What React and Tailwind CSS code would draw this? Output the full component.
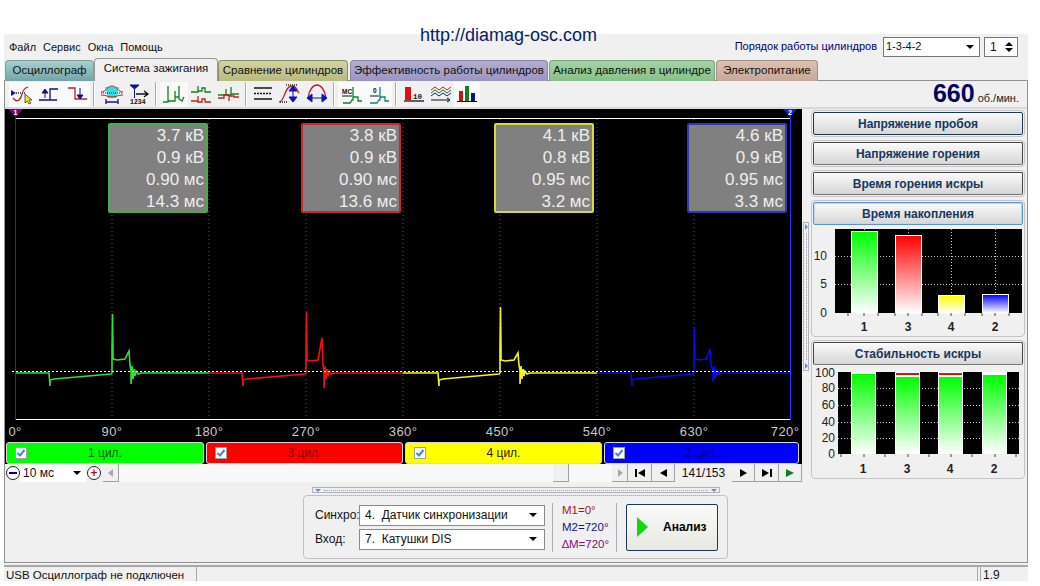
const font = "font-['Liberation_Sans',Arial,sans-serif]";

const infoBoxes = [
  { rows: ['3.7 кВ', '0.9 кВ', '0.90 мс', '14.3 мс'], border: 'border-[#44b044]' },
  { rows: ['3.8 кВ', '0.9 кВ', '0.90 мс', '13.6 мс'], border: 'border-[#c42a2a]' },
  { rows: ['4.1 кВ', '0.8 кВ', '0.95 мс', '3.2 мс'], border: 'border-[#d8d838]' },
  { rows: ['4.6 кВ', '0.9 кВ', '0.95 мс', '3.3 мс'], border: 'border-[#3038b8]' },
];

const channels = [
  { label: '1 цил.', cls: 'bg-[#00ff00] text-[#0a5a0a] w-[198px]' },
  { label: '3 цил.', cls: 'bg-[#ff0000] text-[#8a0000] w-[197px]' },
  { label: '4 цил.', cls: 'bg-[#ffff00] text-[#222200] w-[197px]' },
  { label: '2 цил.', cls: 'bg-[#0000ff] text-[#000090] w-[195px]' },
];

const waves = [
  { color: '#2fe02f', x0: 16, x1: 209, drop: 49, spike: 112, top: 315, plat: 360, bumpX: 129, bumpY: 352, fallX: 131, fallY: 385 },
  { color: '#f01010', x0: 209, x1: 403, drop: 242, spike: 306, top: 313, plat: 361, bumpX: 322, bumpY: 339, fallX: 324, fallY: 389 },
  { color: '#f4f420', x0: 403, x1: 597, drop: 438, spike: 500, top: 308, plat: 361, bumpX: 518, bumpY: 354, fallX: 520, fallY: 385 },
  { color: '#0808e8', x0: 597, x1: 790, drop: 631, spike: 694, top: 328, plat: 360, bumpX: 710, bumpY: 350, fallX: 713, fallY: 383 },
];

const wavePath = (w) => {
  const { x0, x1, drop, spike, top, plat, bumpX, bumpY, fallX, fallY } = w;
  return [
    `M${x0} 374 L${drop} 374 L${drop + 1} 387 L${drop + 1} 381 L${drop + 5} 380 L${spike - 1} 375 L${spike} 374`,
    `L${spike} 350 L${spike + 0.5} ${top} L${spike + 1} 350 L${spike + 1} ${plat} L${spike + 5} ${plat + 1} L${bumpX - 4} ${plat}`,
    `L${bumpX} ${bumpY} L${bumpX + 1} 366 L${fallX} 372 L${fallX} ${fallY} L${fallX + 1} 367 L${fallX + 2} 380 L${fallX + 3} 370`,
    `L${fallX + 4} 377 L${fallX + 5} 372 L${fallX + 7} 375 L${fallX + 10} 374 L${x1} 374`,
  ].join(' ');
};

const Scope = () => {
  const grid = [112, 209, 306, 403, 500, 597, 694];
  const degrees = [[15, '0°'], [112, '90°'], [209, '180°'], [306, '270°'], [403, '360°'], [500, '450°'], [597, '540°'], [694, '630°'], [785, '720°']];
  return (
    <svg className="absolute inset-0" width="797" height="355" viewBox="5 110 797 355">
      {grid.map((x) => (
        <line key={x} x1={x} x2={x} y1="120" y2="420" stroke="#555" strokeDasharray="1 3" />
      ))}
      <line x1="16" x2="790" y1="119.5" y2="119.5" stroke="#fff" />
      <line x1="16" x2="790" y1="420.5" y2="420.5" stroke="#fff" />
      <line x1="15.5" x2="15.5" y1="112" y2="421" stroke="#800080" />
      <line x1="790.5" x2="790.5" y1="112" y2="421" stroke="#2030ff" />
      <path d="M8 110 H23 L15.5 118 Z" fill="#800080" />
      <path d="M783 110 H797 L790 118 Z" fill="#1020e0" />
      <text x="15.5" y="116" fontSize="7" fontWeight="700" fill="#fff" textAnchor="middle">1</text>
      <text x="790" y="116" fontSize="7" fontWeight="700" fill="#fff" textAnchor="middle">2</text>
      {waves.map((w) => (
        <path key={w.x0} d={wavePath(w)} fill="none" stroke={w.color} strokeWidth="1.6" />
      ))}
      <line x1="12" x2="790" y1="372.5" y2="372.5" stroke="#fff" strokeDasharray="2 2" />
      {degrees.map(([x, t]) => (
        <text key={t} x={x} y="437" fontSize="13" fill="#c8c8c8" textAnchor="middle" letterSpacing="0.4">{t}</text>
      ))}
    </svg>
  );
};

const Check = () => (
  <span className="flex h-[12px] w-[12px] items-center justify-center border border-[#a0a0a0] bg-white">
    <svg width="10" height="10" viewBox="0 0 10 10"><path d="M1.5 5 L4 7.5 L8.5 2" fill="none" stroke="#3a8ad8" strokeWidth="2" /></svg>
  </span>
);

const Tri = ({ d, fill = '#000' }) => (
  <svg width="14" height="12" viewBox="0 0 14 12"><path d={d} fill={fill} /></svg>
);

const NavBtn = ({ w, children }) => (
  <div className={`flex h-[18px] items-center justify-center border-r border-b border-[#a0a0a0] bg-[#f0f0f0] ${w}`}>{children}</div>
);

// toolbar icons, each drawn on a 24x22 box
const s = { fill: 'none', strokeWidth: 1.3 };
const icons = {
  cursor: (
    <>
      <path d="M1 7 L6 10 L1 13 Z" fill="#1010c0" />
      <path d="M6 10 H16" stroke="#222" strokeDasharray="1 1" {...s} />
      <path d="M3 15 C7 20 10 18 12 11 C13 7 15 5 18 4" stroke="#c02020" {...s} />
      <path d="M15 11 L15 20 L17 18 L19 21 L21 20 L19 17 L22 17 Z" fill="#f0e020" stroke="#222" strokeWidth="0.7" />
    </>
  ),
  rise: (
    <>
      <path d="M2 17 H20 M9 17 L13 17 V6 H21" stroke="#101080" {...s} />
      <path d="M8 6 L5 10 H11 Z M8 10 V15" fill="#101080" stroke="#101080" />
    </>
  ),
  fall: (
    <>
      <path d="M3 5 H10 V16 H22" stroke="#c02020" {...s} />
      <path d="M15 16 L12 12 H18 Z M15 5 V12" fill="#101080" stroke="#101080" />
    </>
  ),
  cyan: (
    <>
      <path d="M5 4 H19 L16 15 H8 Z" fill="#30e0e8" />
      <path d="M1 9 C6 9 7 3 12 3 C17 3 18 9 23 9 M1 12 C6 12 8 14 12 14 C16 14 18 12 23 12" stroke="#c02020" {...s} strokeWidth="1" />
      <path d="M1 10 H23" stroke="#222" strokeDasharray="1 1" {...s} strokeWidth="1" />
      <path d="M6 19 H18 M6 16 V21 M18 16 V21" stroke="#101090" {...s} />
    </>
  ),
  order: (
    <>
      <path d="M3 2 H12 L7.5 6 Z M7.5 6 V15" fill="#101090" stroke="#101090" />
      <path d="M9 11 H20 M17 8 L21 11 L17 14" stroke="#111" {...s} />
      <text x="3" y="21" fontSize="6.5" fontFamily="Liberation Mono" fontWeight="700" fill="#111">1234</text>
    </>
  ),
  spikes: <path d="M1 19 H6 V3 V18 H10 M10 18 L13 18 V8 L13 18 M13 14 H17 V3 V16 L20 18 L22 14" stroke="#108020" {...s} />,
  stacked: (
    <>
      <path d="M1 9 H8 V3 V8 H12 V5 H15 V9 H21" stroke="#108020" {...s} />
      <path d="M1 18 H8 V13 V19 H12 V16 H15 V19 H21" stroke="#c02020" {...s} />
    </>
  ),
  overlay: (
    <>
      <path d="M1 12 H9 V6 V12 H14 V4 V11 H22" stroke="#108020" {...s} />
      <path d="M1 15 H7 V12 H12 V18 V13 H17 V14 H22" stroke="#c02020" {...s} />
    </>
  ),
  lines: (
    <>
      <path d="M3 5 H21 M3 16 H21" stroke="#111" {...s} />
      <path d="M3 10.5 H21" stroke="#111" strokeDasharray="2 1" {...s} />
    </>
  ),
  height: (
    <>
      <path d="M1 19 C7 19 6 3 14 3 C19 3 19 8 21 10" stroke="#c02020" {...s} />
      <path d="M2 19 H9 M8 2 H20" stroke="#222" strokeDasharray="1 1" {...s} />
      <path d="M15 3 L11 8 H19 Z M15 19 L11 14 H19 Z M15 8 V14" fill="#1010c0" stroke="#1010c0" />
    </>
  ),
  arc: (
    <>
      <path d="M3 15 C4 7 8 2 12 2 C16 2 20 7 21 15" stroke="#c02020" {...s} />
      <path d="M2 15 L7 11 V19 Z M22 15 L17 11 V19 Z M6 15 H18" fill="#1010c0" stroke="#1010c0" />
    </>
  ),
  msStep: (
    <>
      <path d="M3 20 H10 L12 17 H13 V4 V14 H18 V18 H22" stroke="#108030" {...s} />
      <text x="2" y="11" fontSize="6.5" fontWeight="700" fill="#111">МС</text>
      <path d="M2 13 H12" stroke="#111" strokeWidth="1" />
    </>
  ),
  zeroStep: (
    <>
      <path d="M3 20 H10 L12 17 H13 V4 V14 H18 V18 H22" stroke="#108080" {...s} />
      <text x="6" y="10" fontSize="6.5" fontWeight="700" fill="#111">0</text>
      <path d="M3 13 H12" stroke="#111" strokeWidth="1" />
    </>
  ),
  redBar: (
    <>
      <rect x="3" y="4" width="6" height="13" fill="#e01010" />
      <path d="M2 18 H22" stroke="#111" {...s} />
      <text x="11" y="16" fontSize="7.5" fontFamily="Liberation Mono" fontWeight="700" fill="#111">10</text>
    </>
  ),
  wavy: (
    <>
      <path d="M2 7 L6 4 L10 7 L14 4 L18 7 L22 4" stroke="#c02020" {...s} strokeWidth="1" />
      <path d="M2 10 L6 7 L10 10 L14 7 L18 10 L22 7" stroke="#108020" {...s} strokeWidth="1" />
      <path d="M2 13 L6 10 L10 13 L14 10 L18 13 L22 10" stroke="#1010c0" {...s} strokeWidth="1" />
      <path d="M2 17 H20 M18 15 L21 17 L18 19" stroke="#111" {...s} strokeWidth="1" />
    </>
  ),
  bars: (
    <>
      <rect x="4" y="8" width="4" height="10" fill="#d01010" />
      <rect x="10" y="3" width="4" height="15" fill="#108020" />
      <rect x="16" y="10" width="4" height="8" fill="#101090" />
      <path d="M2 18.5 H22" stroke="#111" strokeWidth="1" />
    </>
  ),
};

const Tool = ({ name, w = 'w-[26px]', active }) => (
  <div className={`flex h-[25px] shrink-0 items-center justify-center ${w} ${active ? 'bg-[#fafafa]' : ''}`}>
    <svg width="24" height="22" viewBox="0 0 24 22">{icons[name]}</svg>
  </div>
);

const Sep = () => <div className="mx-[3px] h-[24px] w-[2px] shrink-0 border-r border-l border-r-white border-l-[#a8a8a8]" />;

const Toolbar = () => (
  <div className="flex h-[28px] items-center justify-between border-b-2 border-[#d8d8d8] pr-[8px] pl-[4px]">
    <div className="flex items-center">
      <Tool name="cursor" active />
      <Tool name="rise" w="w-[28px]" active />
      <Tool name="fall" w="w-[27px]" active />
      <Sep />
      <Tool name="cyan" w="w-[28px]" />
      <Tool name="order" w="w-[26px]" />
      <Sep />
      <Tool name="spikes" w="w-[28px]" active />
      <Tool name="stacked" w="w-[27px]" />
      <Tool name="overlay" w="w-[27px]" />
      <Sep />
      <Tool name="lines" w="w-[26px]" />
      <Tool name="height" w="w-[28px]" />
      <Tool name="arc" w="w-[26px]" />
      <Sep />
      <Tool name="msStep" w="w-[27px]" active />
      <Tool name="zeroStep" w="w-[27px]" active />
      <Sep />
      <Tool name="redBar" w="w-[27px]" />
      <Tool name="wavy" w="w-[27px]" />
      <Tool name="bars" w="w-[26px]" active />
    </div>
    <div className="flex items-baseline gap-[3px]">
      <span className="text-[25px] leading-none font-bold text-[#000060]">660</span>
      <span className="text-[11px] text-[#222]">об./мин.</span>
    </div>
  </div>
);

const PanelButton = ({ label, variant }) => {
  const look =
    variant === 'focus'
      ? 'border-[#17375e]'
      : variant === 'light'
        ? 'border-[#5a94d0] shadow-[inset_0_0_0_1px_#bcd8f0]'
        : 'border-[#444] border-b-[#777]';
  return (
    <div className={`flex h-[23px] items-center justify-center rounded-[2px] border bg-gradient-to-b from-[#fafafa] to-[#d6d6d6] text-[12px] font-bold text-[#17375e] ${look}`}>
      {label}
    </div>
  );
};

const Group = ({ children }) => (
  <div className="rounded-[4px] border border-[#c4c4c4] p-[1px] pt-[1px]">{children}</div>
);

const ChartTime = () => {
  const bars = [
    { x: 851, top: 236, c: 'gtGreen' },
    { x: 895, top: 240, c: 'gtRed' },
    { x: 938, top: 300, c: 'gtYellow' },
    { x: 982, top: 299, c: 'gtBlue' },
  ];
  return (
    <svg className="block" width="210" height="110" viewBox="813 230 210 110">
      <defs>
        {[['gtGreen', '#00ff00'], ['gtRed', '#ff0000'], ['gtYellow', '#ffff00'], ['gtBlue', '#0000ff']].map(([id, c]) => (
          <linearGradient key={id} id={id} x1="0" y1="0" x2="0" y2="1">
            <stop offset="0" stopColor={c} />
            <stop offset="1" stopColor="#fff" />
          </linearGradient>
        ))}
      </defs>
      <rect x="835" y="234" width="187" height="84" fill="#000" />
      {[261, 289].map((y) => (
        <line key={y} x1="835" x2="1022" y1={y + 0.5} y2={y + 0.5} stroke="#ccc" strokeDasharray="1 2" />
      ))}
      {[864, 908, 951, 995].map((x) => (
        <line key={x} x1={x + 0.5} x2={x + 0.5} y1="234" y2="318" stroke="#ccc" strokeDasharray="1 2" />
      ))}
      {bars.map((b) => (
        <rect key={b.x} x={b.x + 0.5} y={b.top + 0.5} width="26" height={318 - b.top - 0.5} fill={`url(#${b.c})`} stroke="#fff" />
      ))}
      {[[261, '10'], [289, '5'], [318, '0']].map(([y, t]) => (
        <text key={t} x="827" y={y + 4} fontSize="12" fill="#222" textAnchor="end">{t}</text>
      ))}
      {[848, 864, 878, 895, 908, 922, 938, 951, 965, 982, 995, 1009].map((x) => (
        <line key={x} x1={x} x2={x} y1="318" y2="321" stroke="#444" />
      ))}
      {[['1', 864], ['3', 908], ['4', 951], ['2', 995]].map(([t, x]) => (
        <text key={t} x={x} y="336" fontSize="12" fontWeight="700" fill="#222" textAnchor="middle">{t}</text>
      ))}
    </svg>
  );
};

const ChartStability = () => {
  const bars = [
    { x: 851, top: 379 },
    { x: 895, top: 382, red: true },
    { x: 938, top: 382, red: true },
    { x: 982, top: 380 },
  ];
  return (
    <svg className="block" width="210" height="112" viewBox="813 370 210 112">
      <defs>
        <linearGradient id="gsGreen" x1="0" y1="0" x2="0" y2="1">
          <stop offset="0" stopColor="#00ff00" />
          <stop offset="1" stopColor="#fff" />
        </linearGradient>
      </defs>
      <rect x="838" y="377" width="181" height="82" fill="#000" />
      {[393, 410, 427, 443].map((y) => (
        <line key={y} x1="838" x2="1019" y1={y + 0.5} y2={y + 0.5} stroke="#ccc" strokeDasharray="1 2" />
      ))}
      {bars.map((b) => (
        <g key={b.x}>
          <rect x={b.x} y="377" width="25" height="82" fill="#fff" />
          <rect x={b.x + 1} y={b.top} width="23" height={459 - b.top} fill="url(#gsGreen)" />
          {b.red && <rect x={b.x + 1} y="378" width="23" height="2" fill="#e01010" />}
        </g>
      ))}
      {[[378, '100'], [393, '80'], [410, '60'], [427, '40'], [443, '20'], [459, '0']].map(([y, t]) => (
        <text key={t} x="835" y={y + 4} fontSize="12" fill="#222" textAnchor="end">{t}</text>
      ))}
      {[841, 864, 885, 908, 929, 951, 972, 995, 1016].map((x) => (
        <line key={x} x1={x} x2={x} y1="459" y2="462" stroke="#444" />
      ))}
      {[['1', 863], ['3', 907], ['4', 950], ['2', 994]].map(([t, x]) => (
        <text key={t} x={x} y="478" fontSize="12" fontWeight="700" fill="#222" textAnchor="middle">{t}</text>
      ))}
    </svg>
  );
};

const Caret = () => <span className="h-0 w-0 border-x-[4px] border-t-[4px] border-x-transparent border-t-black" />;

const Select = ({ label }) => (
  <div className="flex h-[21px] w-[186px] items-center justify-between border border-[#8a8a8a] bg-white pr-[7px] pl-[5px] text-[12px] text-[#111]">
    <span className="whitespace-pre">{label}</span>
    <Caret />
  </div>
);

export default function App() {
  return (
    <div className={`relative h-[586px] w-[1040px] overflow-hidden bg-white pt-[34px] pl-[4px] ${font}`}>
      <a className="absolute top-[24px] left-[420px] text-[18px] leading-[22px] text-[#0a1a6a]">http://diamag-osc.com</a>

      <div className="flex h-[547px] w-[1024px] flex-col bg-[#f0f0f0] text-[11px] text-[#111]">
        {/* menu + cylinder order */}
        <div className="flex h-[24px] shrink-0 items-center justify-between pt-[1px] pr-[10px] pl-[5px]">
          <div className="mt-[2px] flex gap-[7px]">
            <span>Файл</span>
            <span>Сервис</span>
            <span>Окна</span>
            <span>Помощь</span>
          </div>
          <div className="flex items-center">
            <span className="mr-[6px] text-[#000080]">Порядок работы цилиндров</span>
            <div className="flex h-[20px] w-[97px] items-center justify-between border border-[#777] bg-white pr-[5px] pl-[2px]">
              1-3-4-2
              <Caret />
            </div>
            <div className="ml-[4px] flex h-[20px] w-[34px] items-center justify-between border border-[#777] bg-white pr-[4px] pl-[5px] text-[12px]">
              1
              <span className="flex flex-col gap-[2px]">
                <span className="h-0 w-0 border-x-[4px] border-b-[4px] border-x-transparent border-b-black" />
                <span className="h-0 w-0 border-x-[4px] border-t-[4px] border-x-transparent border-t-black" />
              </span>
            </div>
          </div>
        </div>

        {/* tabs */}
        <div className="relative z-10 -mb-[1px] flex h-[23px] shrink-0 items-end pl-[1px] text-[11.5px]">
          <div className="flex h-[21px] w-[89px] items-center justify-center rounded-t-[4px] border border-b-0 border-[#8a9a9a] bg-gradient-to-b from-[#a8cfcf] to-[#74a4a8]">Осциллограф</div>
          <div className="flex h-[23px] w-[124px] items-center justify-center rounded-t-[4px] border border-b-0 border-[#999] bg-[#f0f0f0] pb-[3px]">Система зажигания</div>
          <div className="flex h-[21px] w-[130px] items-center justify-center rounded-t-[4px] border border-b-0 border-[#8a8a70] bg-gradient-to-b from-[#d4d4a0] to-[#b8b880]">Сравнение цилиндров</div>
          <div className="ml-[2px] flex h-[21px] w-[198px] items-center justify-center rounded-t-[4px] border border-b-0 border-[#8a88a0] bg-gradient-to-b from-[#b4aed4] to-[#9a94c0]">Эффективность работы цилиндров</div>
          <div className="ml-[1px] flex h-[21px] w-[166px] items-center justify-center rounded-t-[4px] border border-b-0 border-[#80a080] bg-gradient-to-b from-[#a4d4a4] to-[#88c088]">Анализ давления в цилиндре</div>
          <div className="ml-[1px] flex h-[21px] w-[102px] items-center justify-center rounded-t-[4px] border border-b-0 border-[#a09088] bg-gradient-to-b from-[#dcc0b0] to-[#c8a898]">Электропитание</div>
        </div>

        {/* main frame */}
        <div className="flex h-[483px] shrink-0 flex-col border border-[#909090]">
          <Toolbar />
          <div className="flex flex-1">
            <div className="w-[797px] shrink-0">
              <div className="relative flex h-[355px] flex-col bg-black">
                <Scope />
                <div className="relative flex gap-[93px] pt-[14px] pl-[103px]">
                  {infoBoxes.map((b) => (
                    <div key={b.rows[0]} className={`flex h-[90px] w-[100px] flex-col justify-around rounded-[2px] border-2 bg-[#808080] pr-[2px] text-right text-[17px] leading-[22px] text-[#eeeeee] ${b.border}`}>
                      {b.rows.map((r) => (
                        <div key={r}>{r}</div>
                      ))}
                    </div>
                  ))}
                </div>
                <div className="relative mt-auto flex h-[22px] gap-[2px] pl-[1px] text-[12px]">
                  {channels.map((c) => (
                    <div key={c.label} className={`relative flex items-center justify-center rounded-[3px] border border-[#d8d8d8] ${c.cls}`}>
                      <div className="absolute left-[8px]"><Check /></div>
                      {c.label}
                    </div>
                  ))}
                </div>
              </div>

              {/* scroll row */}
              <div className="flex h-[18px] items-center bg-[#f0f0f0] text-[12px]">
                <div className="ml-[1px] flex h-[14px] w-[14px] items-center justify-center rounded-full border border-[#222] bg-white">
                  <span className="h-[2px] w-[8px] bg-[#000080]" />
                </div>
                <div className="flex h-[18px] w-[66px] items-center justify-between bg-white pr-[5px] pl-[3px]">
                  10 мс
                  <Caret />
                </div>
                <div className="ml-[1px] flex h-[14px] w-[14px] items-center justify-center rounded-full border border-[#222] bg-white text-[12px] leading-none font-bold text-[#c01010]">+</div>
                <div className="ml-[2px] flex h-[18px] w-[16px] items-center justify-center border-r border-b border-[#a0a0a0]">
                  <Tri d="M9 2 L4 6 L9 10 Z" fill="#a8a8a8" />
                </div>
                <div className="flex h-[18px] flex-1 items-center bg-[#f8f8f8] bg-[radial-gradient(#e6e6e6_0.5px,transparent_0.5px)] bg-[length:2px_2px]">
                  <div className="ml-[434px] h-[18px] w-[16px] border-r border-b border-[#a0a0a0] bg-[#f0f0f0]" />
                </div>
                <NavBtn w="w-[16px]"><Tri d="M5 2 L10 6 L5 10 Z" fill="#a8a8a8" /></NavBtn>
                <NavBtn w="w-[24px]"><Tri d="M2 2 H4 V10 H2 Z M12 2 V10 L5 6 Z" /></NavBtn>
                <NavBtn w="w-[23px]"><Tri d="M11 2 V10 L4 6 Z" /></NavBtn>
                <div className="flex h-[18px] w-[57px] items-center justify-center">141/153</div>
                <NavBtn w="w-[23px]"><Tri d="M4 2 V10 L11 6 Z" /></NavBtn>
                <NavBtn w="w-[24px]"><Tri d="M2 2 V10 L9 6 Z M10 2 H12 V10 H10 Z" /></NavBtn>
                <NavBtn w="w-[23px]"><Tri d="M3 2 V10 L11 6 Z" fill="#108020" /></NavBtn>
              </div>

              {/* horizontal splitter */}
              <div className="ml-[307px] mt-[5px] flex h-[6px] w-[408px] items-center justify-between border border-[#b0b0c0] px-[2px]">
                <span className="h-0 w-0 border-x-[3px] border-t-[3px] border-x-transparent border-t-[#5090d8]" />
                <span className="mx-[3px] flex-1 border-t border-dotted border-[#80a8d8]" />
                <span className="h-0 w-0 border-x-[3px] border-t-[3px] border-x-transparent border-t-[#5090d8]" />
              </div>

              {/* analysis group */}
              <div className="mt-[2px] ml-[298px] flex h-[64px] w-[425px] items-center rounded-[4px] border border-[#c0c0c0] pl-[11px] text-[12px]">
                <div className="flex flex-col gap-[3px]">
                  <div className="flex items-center">
                    <span className="w-[44px]">Синхро:</span>
                    <Select label="4.  Датчик синхронизации" />
                  </div>
                  <div className="flex items-center">
                    <span className="w-[44px]">Вход:</span>
                    <Select label="7.  Катушки DIS" />
                  </div>
                </div>
                <div className="ml-[7px] h-[49px] w-[1px] bg-[#b0b0b0]" />
                <div className="ml-[9px] flex w-[54px] flex-col gap-[2px] text-[11.5px] leading-[15px]">
                  <span className="text-[#b01010]">M1=0°</span>
                  <span className="text-[#101090]">M2=720°</span>
                  <span className="text-[#801080]">∆M=720°</span>
                </div>
                <div className="h-[49px] w-[1px] bg-[#b0b0b0]" />
                <div className="ml-[9px] flex h-[47px] w-[92px] items-center rounded-[2px] border border-[#17375e] bg-gradient-to-b from-[#fafafa] to-[#e8e8e0] pl-[10px]">
                  <svg width="11" height="20" viewBox="0 0 11 20"><path d="M0 0 L11 10 L0 20 Z" fill="#10d810" /></svg>
                  <span className="ml-[15px] text-[12px] font-bold text-black">Анализ</span>
                </div>
              </div>
            </div>

            {/* vertical splitter */}
            <div className="mt-[113px] ml-[1px] flex h-[149px] w-[6px] shrink-0 flex-col items-center justify-between border border-[#b0b0c0] py-[1px]">
              <span className="h-0 w-0 border-y-[3px] border-l-[3px] border-y-transparent border-l-[#5090d8]" />
              <span className="my-[3px] flex-1 border-l border-dotted border-[#80a8d8]" />
              <span className="h-0 w-0 border-y-[3px] border-l-[3px] border-y-transparent border-l-[#5090d8]" />
            </div>

            {/* right panel */}
            <div className="ml-[2px] flex w-[214px] shrink-0 flex-col gap-[3px] pt-[1px]">
              <Group><PanelButton label="Напряжение пробоя" variant="focus" /></Group>
              <Group><PanelButton label="Напряжение горения" /></Group>
              <Group><PanelButton label="Время горения искры" /></Group>
              <Group>
                <PanelButton label="Время накопления" variant="light" />
                <ChartTime />
              </Group>
              <Group>
                <PanelButton label="Стабильность искры" />
                <ChartStability />
              </Group>
            </div>
          </div>
        </div>

        {/* status bar */}
        <div className="mt-[2px] flex h-[16px] shrink-0 border-t-2 border-[#a8a8a8] text-[11.5px] leading-[16px]">
          <div className="w-[192px] pl-[2px]">USB Осциллограф не подключен</div>
          <div className="w-[782px] border-x border-[#a8a8a8]" />
          <div className="ml-[2px] flex-1 border-l border-[#a8a8a8] pl-[2px] text-[12px]">1.9</div>
        </div>
      </div>
    </div>
  );
}
